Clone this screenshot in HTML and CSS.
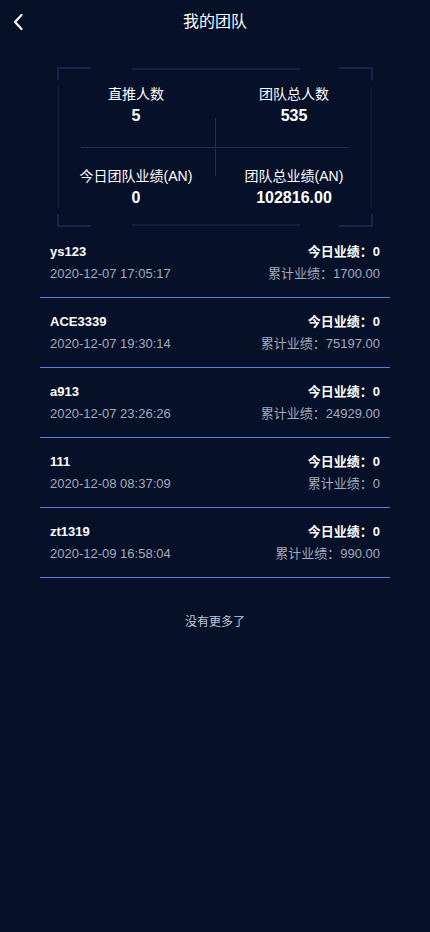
FILE: index.html
```
<!DOCTYPE html>
<html>
<head>
	<title>我的团队</title>
	<meta charset="utf-8"/>
	<link rel="stylesheet" href="styles.css">
</head>
<body>

<div class="nav">
	<svg class="back" width="12" height="18" viewBox="0 0 12 18"><path d="M9.5 2 L3 9 L9.5 16" fill="none" stroke="#fff" stroke-width="2.2" stroke-linecap="round" stroke-linejoin="round"/></svg>
	<span class="title">我的团队</span>
</div>

<div class="card">
	<svg class="frame" width="316" height="162" viewBox="0 0 316 162">
		<g fill="none" stroke-width="1.5">
			<path d="M1 14 V2 H34" stroke="#1c2d52"/>
			<path d="M282 2 H315 V14" stroke="#1c2d52"/>
			<path d="M1 148 V160 H34" stroke="#1c2d52"/>
			<path d="M282 160 H315 V148" stroke="#1c2d52"/>
			<path d="M75 3 H243" stroke="#172748"/>
			<path d="M75 159 H243" stroke="#172748"/>
			<path d="M1.5 20 V142" stroke="#101c38"/>
			<path d="M314.5 20 V142" stroke="#101c38"/>
		</g>
		<g stroke="#1b2e54" stroke-width="1">
			<path d="M24 81.5 H292"/>
			<path d="M158.5 52 V110"/>
		</g>
	</svg>
	<div class="stats">
		<div class="stat">
			<p class="label">直推人数</p>
			<p class="num">5</p>
		</div>
		<div class="stat">
			<p class="label">团队总人数</p>
			<p class="num">535</p>
		</div>
		<div class="stat">
			<p class="label">今日团队业绩(AN)</p>
			<p class="num">0</p>
		</div>
		<div class="stat">
			<p class="label">团队总业绩(AN)</p>
			<p class="num">102816.00</p>
		</div>
	</div>
</div>

<ul class="list">
	<li>
		<div class="left"><p class="name">ys123</p><p class="time">2020-12-07 17:05:17</p></div>
		<div class="right"><p class="today">今日业绩：0</p><p class="total">累计业绩：1700.00</p></div>
	</li>
	<li>
		<div class="left"><p class="name">ACE3339</p><p class="time">2020-12-07 19:30:14</p></div>
		<div class="right"><p class="today">今日业绩：0</p><p class="total">累计业绩：75197.00</p></div>
	</li>
	<li>
		<div class="left"><p class="name">a913</p><p class="time">2020-12-07 23:26:26</p></div>
		<div class="right"><p class="today">今日业绩：0</p><p class="total">累计业绩：24929.00</p></div>
	</li>
	<li>
		<div class="left"><p class="name">111</p><p class="time">2020-12-08 08:37:09</p></div>
		<div class="right"><p class="today">今日业绩：0</p><p class="total">累计业绩：0</p></div>
	</li>
	<li>
		<div class="left"><p class="name">zt1319</p><p class="time">2020-12-09 16:58:04</p></div>
		<div class="right"><p class="today">今日业绩：0</p><p class="total">累计业绩：990.00</p></div>
	</li>
</ul>

<p class="nomore">没有更多了</p>

</body>
</html>
```

FILE: styles.css
```
* {
	margin: 0px;
	padding: 0px;
}

html, body {
	background-color: #071029;
}
body {
	width: 430px;
	min-height: 932px;
	color: #fff;
	font-family: "Liberation Sans", Arial, "Noto Sans CJK SC", sans-serif;
}

.nav {
	position: relative;
	height: 44px;
	display: flex;
	align-items: center;
	justify-content: center;
}
	.nav .back {
		position: absolute;
		left: 12px;
		top: 13px;
	}
	.nav .title {
		font-size: 16px;
		line-height: 44px;
	}

.card {
	position: relative;
	width: 316px;
	height: 162px;
	margin: 22px auto 0 57px;
}
	.card .frame {
		position: absolute;
		left: 0px;
		top: 0px;
	}
	.stats {
		position: relative;
		display: grid;
		grid-template-columns: 1fr 1fr;
		row-gap: 38px;
		padding-top: 17px;
	}
		.stat {
			text-align: center;
		}
		.stat .label {
			font-size: 14px;
			line-height: 22px;
		}
		.stat .num {
			font-size: 16px;
			font-weight: bold;
			line-height: 22px;
		}

.list {
	list-style: none;
	margin: 0 40px;
}
	.list li {
		display: flex;
		justify-content: space-between;
		padding: 13px 10px 12px 10px;
		border-bottom: 1px solid #5b7fd4;
		line-height: 22px;
		font-size: 13px;
	}
	.list .name {
		font-weight: bold;
	}
	.list .time {
		color: #a3aabb;
	}
	.list .right {
		text-align: right;
	}
	.list .today {
		font-weight: bold;
	}
	.list .total {
		color: #a3aabb;
	}

.nomore {
	text-align: center;
	font-size: 12px;
	color: #c3c9d6;
	margin-top: 34px;
}
```
